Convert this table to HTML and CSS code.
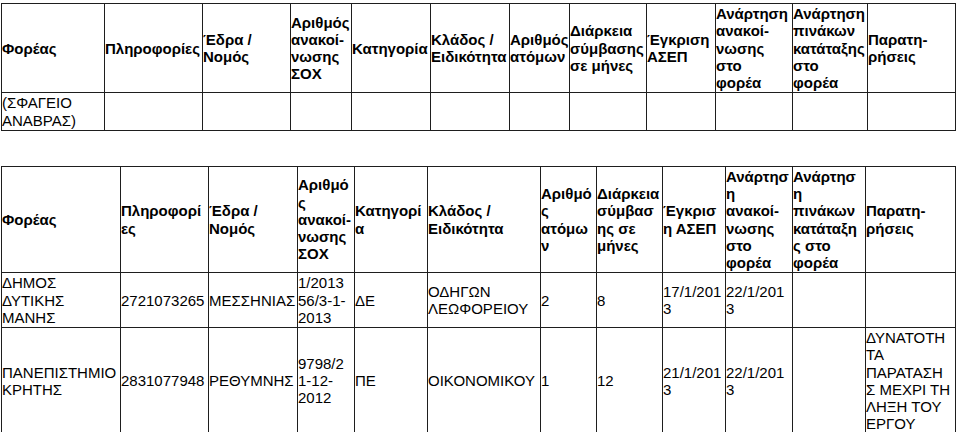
FILE: index.html
```html
<!DOCTYPE html>
<html lang="el">
<head>
<meta charset="utf-8">
<title>Προκηρύξεις ΣΟΧ</title>
<link rel="stylesheet" href="styles.css">
</head>
<body>
<table class="grid grid-top">
  <colgroup>
    <col class="t1c1"><col class="t1c2"><col class="t1c3"><col class="t1c4"><col class="t1c5"><col class="t1c6">
    <col class="t1c7"><col class="t1c8"><col class="t1c9"><col class="t1c10"><col class="t1c11"><col class="t1c12">
  </colgroup>
  <thead>
    <tr>
      <th>Φορέας</th>
      <th>Πληροφορίες</th>
      <th>Έδρα /<br>Νομός</th>
      <th>Αριθμός<br>ανακοί-<br>νωσης<br>ΣΟΧ</th>
      <th>Κατηγορία</th>
      <th>Κλάδος /<br>Ειδικότητα</th>
      <th>Αριθμός<br>ατόμων</th>
      <th>Διάρκεια<br>σύμβασης<br>σε μήνες</th>
      <th>Έγκριση<br>ΑΣΕΠ</th>
      <th>Ανάρτηση<br>ανακοί-<br>νωσης<br>στο<br>φορέα</th>
      <th>Ανάρτηση<br>πινάκων<br>κατάταξης<br>στο<br>φορέα</th>
      <th>Παρατη-<br>ρήσεις</th>
    </tr>
  </thead>
  <tbody>
    <tr>
      <td>(ΣΦΑΓΕΙΟ<br>ΑΝΑΒΡΑΣ)</td>
      <td></td><td></td><td></td><td></td><td></td><td></td><td></td><td></td><td></td><td></td><td></td>
    </tr>
  </tbody>
</table>

<table class="grid grid-bottom">
  <colgroup>
    <col class="t2c1"><col class="t2c2"><col class="t2c3"><col class="t2c4"><col class="t2c5"><col class="t2c6">
    <col class="t2c7"><col class="t2c8"><col class="t2c9"><col class="t2c10"><col class="t2c11"><col class="t2c12">
  </colgroup>
  <thead>
    <tr>
      <th>Φορέας</th>
      <th>Πληροφορί<br>ες</th>
      <th>Έδρα /<br>Νομός</th>
      <th>Αριθμό<br>ς<br>ανακοί-<br>νωσης<br>ΣΟΧ</th>
      <th>Κατηγορί<br>α</th>
      <th>Κλάδος /<br>Ειδικότητα</th>
      <th>Αριθμό<br>ς<br>ατόμω<br>ν</th>
      <th>Διάρκεια<br>σύμβασ<br>ης σε<br>μήνες</th>
      <th>Έγκρισ<br>η ΑΣΕΠ</th>
      <th>Ανάρτησ<br>η<br>ανακοί-<br>νωσης<br>στο<br>φορέα</th>
      <th>Ανάρτησ<br>η<br>πινάκων<br>κατάταξη<br>ς στο<br>φορέα</th>
      <th>Παρατη-<br>ρήσεις</th>
    </tr>
  </thead>
  <tbody>
    <tr>
      <td>ΔΗΜΟΣ<br>ΔΥΤΙΚΗΣ<br>ΜΑΝΗΣ</td>
      <td>2721073265</td>
      <td>ΜΕΣΣΗΝΙΑΣ</td>
      <td>1/2013<br>56/3-1-<br>2013</td>
      <td>ΔΕ</td>
      <td>ΟΔΗΓΩΝ<br>ΛΕΩΦΟΡΕΙΟΥ</td>
      <td>2</td>
      <td>8</td>
      <td>17/1/201<br>3</td>
      <td>22/1/201<br>3</td>
      <td></td>
      <td></td>
    </tr>
    <tr>
      <td>ΠΑΝΕΠΙΣΤΗΜΙΟ<br>ΚΡΗΤΗΣ</td>
      <td>2831077948</td>
      <td>ΡΕΘΥΜΝΗΣ</td>
      <td>9798/2<br>1-12-<br>2012</td>
      <td>ΠΕ</td>
      <td>ΟΙΚΟΝΟΜΙΚΟΥ</td>
      <td>1</td>
      <td>12</td>
      <td>21/1/201<br>3</td>
      <td>22/1/201<br>3</td>
      <td></td>
      <td>ΔΥΝΑΤΟΤΗ<br>ΤΑ<br>ΠΑΡΑΤΑΣΗ<br>Σ ΜΕΧΡΙ ΤΗ<br>ΛΗΞΗ ΤΟΥ<br>ΕΡΓΟΥ</td>
    </tr>
  </tbody>
</table>
</body>
</html>
```

FILE: styles.css
```css
html, body {
  background: #ffffff;
}

body {
  margin: 3px 0 0 1px;
  font-family: "Liberation Sans", Arial, sans-serif;
  font-size: 15px;
  line-height: 17.25px;
  color: #000000;
}

.grid {
  width: 955px;
  table-layout: fixed;
  border-collapse: collapse;
}

.grid th,
.grid td {
  border: 1px solid #1e1e1e;
  padding: 1px 0;
  text-align: left;
  vertical-align: middle;
  font-weight: normal;
  white-space: nowrap;
  overflow: visible;
}

.grid th {
  font-weight: bold;
}

.grid-bottom {
  margin-top: 35px;
}

/* top table columns */
.t1c1 { width: 103px; }
.t1c2 { width: 98px; }
.t1c3 { width: 88px; }
.t1c4 { width: 61px; }
.t1c5 { width: 79px; }
.t1c6 { width: 79px; }
.t1c7 { width: 60px; }
.t1c8 { width: 77px; }
.t1c9 { width: 69px; }
.t1c10 { width: 77px; }
.t1c11 { width: 75px; }
.t1c12 { width: 88px; }

/* bottom table columns */
.t2c1 { width: 119px; }
.t2c2 { width: 88px; }
.t2c3 { width: 89px; }
.t2c4 { width: 57px; }
.t2c5 { width: 73px; }
.t2c6 { width: 113px; }
.t2c7 { width: 56px; }
.t2c8 { width: 66px; }
.t2c9 { width: 63px; }
.t2c10 { width: 67px; }
.t2c11 { width: 73px; }
.t2c12 { width: 90px; }
```
